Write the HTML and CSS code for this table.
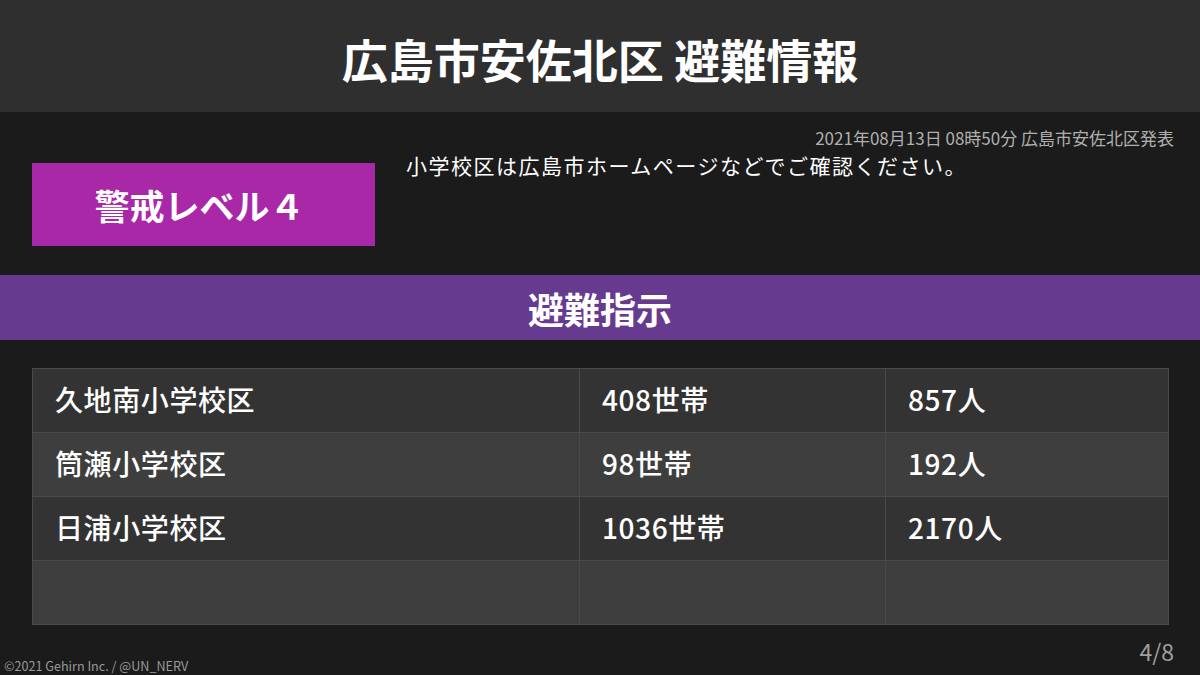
FILE: index.html
```html
<!DOCTYPE html>
<html lang="ja">
<head>
<meta charset="utf-8">
<link rel="stylesheet" href="styles.css">
</head>
<body>
<div class="page">
  <header class="header"><h1 class="title">広島市安佐北区 避難情報</h1></header>
  <section class="info">
    <div class="date">2021年08月13日 08時50分 広島市安佐北区発表</div>
    <div class="info-row">
      <div class="level">警戒レベル４</div>
      <p class="message">小学校区は広島市ホームページなどでご確認ください。</p>
    </div>
  </section>
  <div class="bar">避難指示</div>
  <div class="table-wrap">
    <table class="table">
      <colgroup><col class="c1"><col class="c2"><col class="c3"></colgroup>
      <tr><td>久地南小学校区</td><td>408世帯</td><td>857人</td></tr>
      <tr><td>筒瀬小学校区</td><td>98世帯</td><td>192人</td></tr>
      <tr><td>日浦小学校区</td><td>1036世帯</td><td>2170人</td></tr>
      <tr><td></td><td></td><td></td></tr>
    </table>
  </div>
  <footer class="footer">
    <div class="copy">©2021 Gehirn Inc. / @UN_NERV</div>
    <div class="pagenum">4/8</div>
  </footer>
</div>
</body>
</html>
```
FILE: styles.css
```css
* { box-sizing: border-box; }
html, body { margin: 0; padding: 0; }
body {
  background: #1b1b1b;
  color: #fff;
  font-family: "Noto Sans CJK JP", "Noto Sans", sans-serif;
}
.page { width: 1200px; height: 675px; overflow: hidden; display: flex; flex-direction: column; }
.header {
  height: 112px;
  background: #2f2f2f;
  display: flex;
  align-items: center;
  justify-content: center;
}
.title {
  margin: 0;
  font-size: 46px;
  font-weight: 700;
  line-height: 1;
  padding-top: 4px;
}
.info {
  height: 163px;
  padding: 14px 26px 0 32px;
}
.date {
  text-align: right;
  font-size: 17px;
  line-height: 24px;
  color: #b0b0b0;
}
.info-row { display: flex; align-items: flex-start; }
.level {
  margin-top: 13px;
  width: 343px;
  height: 83px;
  background: #a828a8;
  display: flex;
  align-items: center;
  justify-content: center;
  font-size: 35px;
  font-weight: 700;
  padding-right: 8px;
}
.message {
  margin: 0 0 0 31px;
  font-size: 21px;
  line-height: 30px;
  letter-spacing: 1.5px;
}
.bar {
  height: 65px;
  background: #663a8f;
  display: flex;
  align-items: center;
  justify-content: center;
  font-size: 36px;
  font-weight: 700;
}
.table-wrap { padding: 28px 32px 0 32px; }
.table {
  width: 1136px;
  border-collapse: collapse;
  table-layout: fixed;
}
.c1 { width: 547px; }
.c2 { width: 306px; }
.c3 { width: 283px; }
.table td {
  height: 64px;
  border: 1px solid #4a4a4a;
  padding: 0 0 4px 22px;
  font-size: 28px;
  font-weight: 500;
  letter-spacing: 0.6px;
  vertical-align: middle;
}
.table tr:nth-child(odd) td { background: #333333; }
.table tr:nth-child(even) td { background: #3e3e3e; }
.footer {
  flex: 1;
  display: flex;
  justify-content: space-between;
  align-items: flex-end;
}
.copy {
  font-size: 12.6px;
  line-height: 14px;
  color: #9a9a9a;
  padding: 0 0 2px 4px;
}
.pagenum {
  font-size: 23px;
  line-height: 26px;
  color: #a0a0a0;
  padding: 0 26px 11px 0;
}
```
